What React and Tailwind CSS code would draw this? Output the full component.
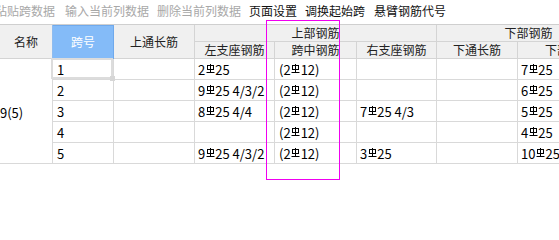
import React from "react";

const Bar = () => (
  <svg width="9" height="10" viewBox="0 0 9 10" className="inline-block align-baseline mx-[0.5px] relative -top-[1px]" fill="none" stroke="currentColor" strokeWidth="1">
    <rect x="1.5" y="1.5" width="6" height="4" />
    <line x1="4.5" y1="0" x2="4.5" y2="8.5" />
    <line x1="0.5" y1="8.5" x2="8.5" y2="8.5" />
  </svg>
);

const R = ({ n, s = "" }) => (
  <span className="whitespace-pre">
    {n}
    <Bar />
    {s}
  </span>
);

const rows = [
  { id: "1", left: <R n="2" s="25" />, mid: <span>(<R n="2" s="12" />)</span>, right: null, bot: <R n="7" s="25   2/5" /> },
  { id: "2", left: <R n="9" s="25 4/3/2" />, mid: <span>(<R n="2" s="12" />)</span>, right: null, bot: <R n="6" s="25   2/4" /> },
  { id: "3", left: <R n="8" s="25 4/4" />, mid: <span>(<R n="2" s="12" />)</span>, right: <R n="7" s="25 4/3" />, bot: <R n="5" s="25" /> },
  { id: "4", left: null, mid: <span>(<R n="2" s="12" />)</span>, right: null, bot: <R n="4" s="25" /> },
  { id: "5", left: <R n="9" s="25 4/3/2" />, mid: <span>(<R n="2" s="12" />)</span>, right: <R n="3" s="25" />, bot: <R n="10" s="25" /> },
];

const hd = "bg-[#f0f0f0] border-r border-b border-[#d4d4d4] flex items-center justify-center text-[#222]";
const dc = "border-r border-b border-[#d9d9d9] flex items-center pl-[3px] text-black whitespace-pre overflow-hidden text-[13px]";

export default function App() {
  return (
    <div
      className="relative w-[559px] h-[201px] overflow-hidden bg-white text-[12px] leading-none"
      style={{ fontFamily: '"Noto Sans CJK SC", "Noto Sans", sans-serif' }}
    >
      <div className="h-[25px] border-b border-[#cfcfcf] flex items-center gap-[8px] pb-[2px] whitespace-nowrap">
        <span className="-ml-[5px] text-[#a8a8a8] mr-[2px]">粘贴跨数据</span>
        <span className="text-[#a8a8a8]">输入当前列数据</span>
        <span className="text-[#a8a8a8]">删除当前列数据</span>
        <span className="text-[#111]">页面设置</span>
        <span className="text-[#111]">调换起始跨</span>
        <span className="text-[#111] ml-[1px]">悬臂钢筋代号</span>
      </div>

      <div className="grid w-[621px] grid-cols-[53px_61px_81px_80px_82px_80px_81px_103px] grid-rows-[17px_17px_21px_21px_21px_21px_21px]">
        <div className={`${hd} row-span-2 !border-r-[#8fbcef]`}>名称</div>
        <div className="row-span-2 bg-[#84bbf8] border-r border-b border-[#6fa9ec] shadow-[inset_0_1px_0_#6fa9ec] flex items-center justify-center text-white">跨号</div>
        <div className={`${hd} row-span-2`}>上通长筋</div>
        <div className={`${hd} col-span-3`}>上部钢筋</div>
        <div className={`${hd} col-span-2`}>下部钢筋</div>
        <div className={hd}>左支座钢筋</div>
        <div className={hd}>跨中钢筋</div>
        <div className={hd}>右支座钢筋</div>
        <div className={hd}>下通长筋</div>
        <div className={hd}>下部钢筋</div>

        <div className="row-span-5 border-r border-b border-[#d9d9d9] flex items-center pt-[2px] text-black text-[13px] col-start-1 row-start-3">9(5)</div>
        {rows.map((r, i) => (
          <React.Fragment key={r.id}>
            <div className={`${dc} col-start-2 pl-[4px]`} style={{ gridRowStart: i + 3 }}>{r.id}</div>
            <div className={dc}></div>
            <div className={dc}>{r.left}</div>
            <div className={`${dc} pl-[4px]`}>{r.mid}</div>
            <div className={dc}>{r.right}</div>
            <div className={dc}></div>
            <div className={dc}>{r.bot}</div>
          </React.Fragment>
        ))}
      </div>

      <div className="absolute left-[51px] top-[58px] w-[62px] h-[21px] border-2 border-[#dcdcdc] pointer-events-none" />
      <div className="absolute left-[110px] top-[76px] w-[5px] h-[5px] bg-[#d6d6d6]" />
      <div className="absolute left-[266px] top-[20px] w-[74px] h-[160px] border border-[#f000f0] pointer-events-none" />
    </div>
  );
}
